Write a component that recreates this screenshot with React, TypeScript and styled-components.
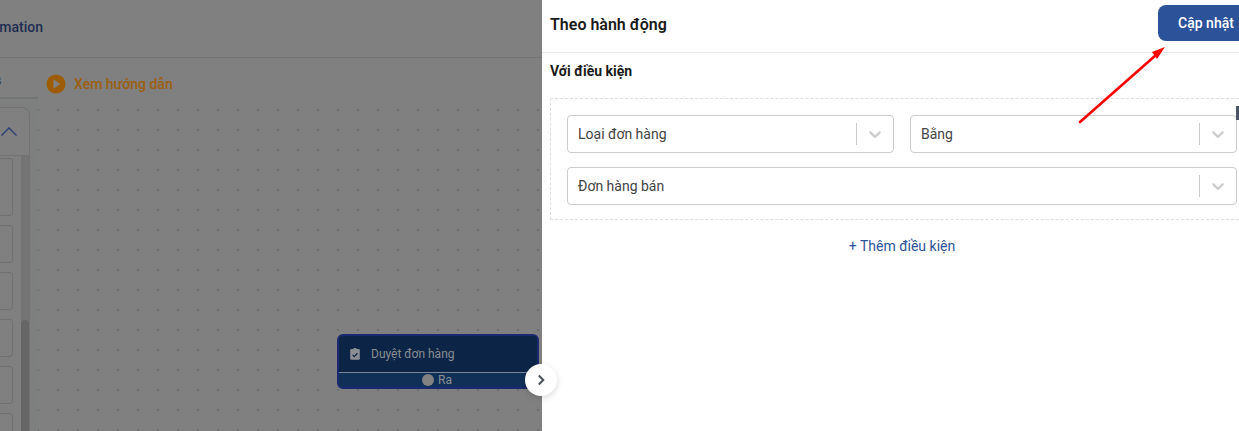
import React from "react";
import styled, { createGlobalStyle } from "styled-components";

const GlobalStyle = createGlobalStyle`
  html, body {
    margin: 0;
    padding: 0;
    height: 100%;
    overflow: hidden;
    background: #fff;
    font-family: Roboto, "Liberation Sans", sans-serif;
  }
`;

const Page = styled.div`
  position: relative;
  display: flex;
  width: 1239px;
  height: 431px;
  overflow: hidden;
`;

/* dimmed workflow editor behind the drawer */
const Backdrop = styled.div`
  position: relative;
  flex: 0 0 542px;
  display: flex;
  flex-direction: column;
  background: #808080;
  overflow: hidden;
`;

const TopBar = styled.div`
  flex: 0 0 57px;
  box-sizing: border-box;
  display: flex;
  align-items: center;
  justify-content: flex-end;
  width: 43px;
  padding-bottom: 4px;
  overflow: hidden;
  white-space: nowrap;
  font-size: 14px;
  font-weight: 500;
  color: #1d2e52;
`;

const TopBarRule = styled.div`
  flex: 0 0 1px;
  background: #737373;
`;

const Toolbar = styled.div`
  flex: 0 0 41px;
  min-height: 0;
  display: flex;
  align-items: stretch;
`;

const TabStub = styled.div`
  flex: 0 0 38px;
  box-sizing: border-box;
  height: 41px;
  border-bottom: 2px solid #757575;
  overflow: hidden;
  font-size: 14px;
  font-weight: 500;
  line-height: 44px;
  color: #2a2a2a;
  text-indent: -6px;
`;

const GuideLink = styled.div`
  display: flex;
  align-items: center;
  gap: 8px;
  margin-left: 8px;
  padding-top: 11px;
  font-size: 14px;
  font-weight: 500;
  color: #9c5f0e;
`;

const Body = styled.div`
  flex: 1;
  display: flex;
  min-height: 0;
`;

const Sidebar = styled.div`
  flex: 0 0 38px;
  box-sizing: border-box;
  padding-top: 8px;
  background: #7e7f7f;
`;

const SideCard = styled.div`
  box-sizing: border-box;
  width: 30px;
  height: 340px;
  display: flex;
  flex-direction: column;
  border: 1px solid #747474;
  border-left: 0;
  border-radius: 0 8px 0 0;
  background: #808080;
  overflow: hidden;
`;

const SideCardHead = styled.div`
  flex: 0 0 47px;
  display: flex;
  align-items: center;
  justify-content: flex-end;
  padding-right: 12px;
  border-bottom: 1px solid #747474;
  color: #253f73;
`;

const SideCardBody = styled.div`
  flex: 1;
  display: flex;
  min-height: 0;
`;

const BlockList = styled.div`
  flex: 0 0 21px;
  display: flex;
  flex-direction: column;
  gap: 9px;
  padding-top: 2px;
`;

const BlockItem = styled.div<{ $tall?: boolean }>`
  flex: 0 0 ${(p) => (p.$tall ? "58px" : "38px")};
  box-sizing: border-box;
  width: 13px;
  border: 1px solid #717171;
  border-left: 0;
  border-radius: 0 4px 4px 0;
`;

const ScrollTrack = styled.div`
  flex: 1;
  box-sizing: border-box;
  padding-top: 164px;
  background: #747474;
`;

const ScrollThumb = styled.div`
  height: 120px;
  width: 8px;
  border-radius: 4px;
  background: #666;
`;

const Canvas = styled.div`
  position: relative;
  flex: 1;
  background-color: #808080;
  background-image: radial-gradient(circle at 1px 1px, #6e6e6e 0.9px, transparent 1.1px);
  background-size: 20px 20px;
  background-position: -1px 10px;
`;

const FlowNode = styled.div`
  position: absolute;
  left: 299px;
  top: 235px;
  box-sizing: border-box;
  width: 202px;
  height: 55px;
  display: flex;
  flex-direction: column;
  border: 2px solid #1b2a70;
  border-radius: 6px;
  background: #0c2547;
  overflow: hidden;
  font-size: 12px;
  color: #8a8e93;
`;

const NodeTitle = styled.div`
  flex: 1;
  display: flex;
  align-items: center;
  gap: 11px;
  padding-left: 11px;
`;

const NodeOutput = styled.div`
  flex: 0 0 13px;
  display: flex;
  align-items: center;
  justify-content: center;
  gap: 4px;
  padding-right: 2px;
  border-top: 1px solid #7c8795;
  background: #103058;
`;

const OutputDot = styled.span`
  width: 12px;
  height: 12px;
  border-radius: 50%;
  background: #828282;
`;

/* drawer */
const Drawer = styled.div`
  flex: 0 0 720px;
  background: #fff;
`;

const DrawerHead = styled.div`
  height: 52px;
  box-sizing: border-box;
  display: flex;
  align-items: center;
  justify-content: space-between;
  padding: 0 8px;
`;

const DrawerRule = styled.div`
  height: 1px;
  background: #e5e7eb;
`;

const DrawerTitle = styled.div`
  margin-top: -4px;
  font-size: 16px;
  font-weight: 600;
  color: #1a1a1a;
`;

const SaveButton = styled.button`
  width: 96px;
  height: 36px;
  margin-top: -6px;
  border: 0;
  border-radius: 8px;
  background: #2c5299;
  color: #fff;
  font-family: inherit;
  font-size: 14px;
  font-weight: 500;
`;

const DrawerBody = styled.div`
  padding: 0 8px;
`;

const SectionLabel = styled.div`
  height: 45px;
  padding-top: 10px;
  box-sizing: border-box;
  font-size: 14px;
  font-weight: 700;
  line-height: 17px;
  color: #1a1a1a;
`;

const ConditionBox = styled.div`
  box-sizing: border-box;
  width: 704px;
  display: grid;
  grid-template-columns: 1fr 1fr;
  gap: 14px 16px;
  padding: 16px 16px 14px;
  border: 1px dashed #dfdfdf;
`;

const SelectShell = styled.div<{ $wide?: boolean }>`
  grid-column: ${(p) => (p.$wide ? "1 / span 2" : "auto")};
  box-sizing: border-box;
  height: 38px;
  display: flex;
  align-items: center;
  border: 1px solid #ccc;
  border-radius: 4px;
  background: #fff;
`;

const SelectValue = styled.div`
  flex: 1;
  padding-left: 10px;
  font-size: 14px;
  color: #444;
`;

const SelectDivider = styled.span`
  width: 1px;
  height: 22px;
  background: #ccc;
`;

const SelectCaret = styled.span`
  display: flex;
  padding: 8px;
  color: #ccc;
`;

const AddCondition = styled.div`
  margin-top: 18px;
  text-align: center;
  font-size: 14px;
  line-height: 17px;
  color: #2c5299;
`;

const ToggleButton = styled.div`
  position: absolute;
  left: 525px;
  top: 364px;
  width: 32px;
  height: 32px;
  display: flex;
  align-items: center;
  justify-content: center;
  border-radius: 50%;
  background: #fff;
  box-shadow: 0 2px 6px rgba(0, 0, 0, 0.15);
  color: #4a505a;
`;

const TooltipEdge = styled.div`
  position: absolute;
  left: 1236px;
  top: 106px;
  width: 5px;
  height: 14px;
  background: #4b5563;
`;

const ArrowMark = styled.svg`
  position: absolute;
  left: 1070px;
  top: 40px;
  pointer-events: none;
`;

const Caret = () => (
  <svg width="20" height="20" viewBox="0 0 20 20" fill="currentColor">
    <path d="M4.516 7.548c0.436-0.446 1.043-0.481 1.576 0l3.908 3.747 3.908-3.747c0.533-0.481 1.141-0.446 1.576 0 0.436 0.445 0.408 1.197 0 1.615-0.406 0.418-4.695 4.502-4.695 4.502-0.217 0.223-0.502 0.335-0.789 0.335s-0.572-0.112-0.789-0.335c0 0-4.287-4.084-4.695-4.502s-0.436-1.17 0-1.615z" />
  </svg>
);

const Select = ({ value, wide }: { value: string; wide?: boolean }) => (
  <SelectShell $wide={wide}>
    <SelectValue>{value}</SelectValue>
    <SelectDivider />
    <SelectCaret>
      <Caret />
    </SelectCaret>
  </SelectShell>
);

const PlayBadge = () => (
  <svg width="20" height="20" viewBox="0 0 20 20">
    <circle cx="10" cy="10" r="9.5" fill="#9e5c00" />
    <path d="M7.5 6.2v7.6a.5.5 0 0 0 .8.4l5.4-3.8a.5.5 0 0 0 0-.8L8.3 5.8a.5.5 0 0 0-.8.4z" fill="#808080" />
  </svg>
);

const ClipboardCheck = () => (
  <svg width="10" height="12" viewBox="0 0 10 12">
    <path
      d="M3.4 1.1a1.6 1.6 0 0 1 3.2 0H8.800a1 1 0 0 1 1 1v8.700a1 1 0 0 1-1 1H1.200a1 1 0 0 1-1-1V2.100a1 1 0 0 1 1-1z"
      fill="#8a8e93"
    />
    <path d="M2.600 6.900l1.700 1.700 3.200-3.300" fill="none" stroke="#0c2547" strokeWidth="1.300" />
  </svg>
);

export default function App() {
  return (
    <Page>
      <GlobalStyle />
      <Backdrop>
        <TopBar>Automation</TopBar>
        <TopBarRule />
        <Toolbar>
          <TabStub>s</TabStub>
          <GuideLink>
            <PlayBadge />
            Xem hướng dẫn
          </GuideLink>
        </Toolbar>
        <Body>
          <Sidebar>
            <SideCard>
              <SideCardHead>
                <svg width="16" height="9" viewBox="0 0 16 9" fill="none" stroke="currentColor" strokeWidth="1.3">
                  <path d="M.5 8.500L8 1l7.500 7.500" />
                </svg>
              </SideCardHead>
              <SideCardBody>
                <BlockList>
                  <BlockItem $tall />
                  <BlockItem />
                  <BlockItem />
                  <BlockItem />
                  <BlockItem />
                  <BlockItem />
                </BlockList>
                <ScrollTrack>
                  <ScrollThumb />
                </ScrollTrack>
              </SideCardBody>
            </SideCard>
          </Sidebar>
          <Canvas>
            <FlowNode>
              <NodeTitle>
                <ClipboardCheck />
                Duyệt đơn hàng
              </NodeTitle>
              <NodeOutput>
                <OutputDot />
                Ra
              </NodeOutput>
            </FlowNode>
          </Canvas>
        </Body>
      </Backdrop>
      <Drawer>
        <DrawerHead>
          <DrawerTitle>Theo hành động</DrawerTitle>
          <SaveButton>Cập nhật</SaveButton>
        </DrawerHead>
        <DrawerRule />
        <DrawerBody>
          <SectionLabel>Với điều kiện</SectionLabel>
          <ConditionBox>
            <Select value="Loại đơn hàng" />
            <Select value="Bằng" />
            <Select value="Đơn hàng bán" wide />
          </ConditionBox>
          <AddCondition>+ Thêm điều kiện</AddCondition>
        </DrawerBody>
      </Drawer>
      <ToggleButton>
        <svg width="12" height="12" viewBox="0 0 12 12" fill="none" stroke="currentColor" strokeWidth="2">
          <path d="M3.800 1.500L8.300 6l-4.500 4.500" />
        </svg>
      </ToggleButton>
      <TooltipEdge />
      <ArrowMark width="100" height="90" viewBox="0 0 100 90">
        <path d="M10 82L86 15" stroke="#f00" strokeWidth="2.600" strokeLinecap="round" />
        <path d="M95 7L87 19 82 12z" fill="#f00" />
      </ArrowMark>
    </Page>
  );
}
